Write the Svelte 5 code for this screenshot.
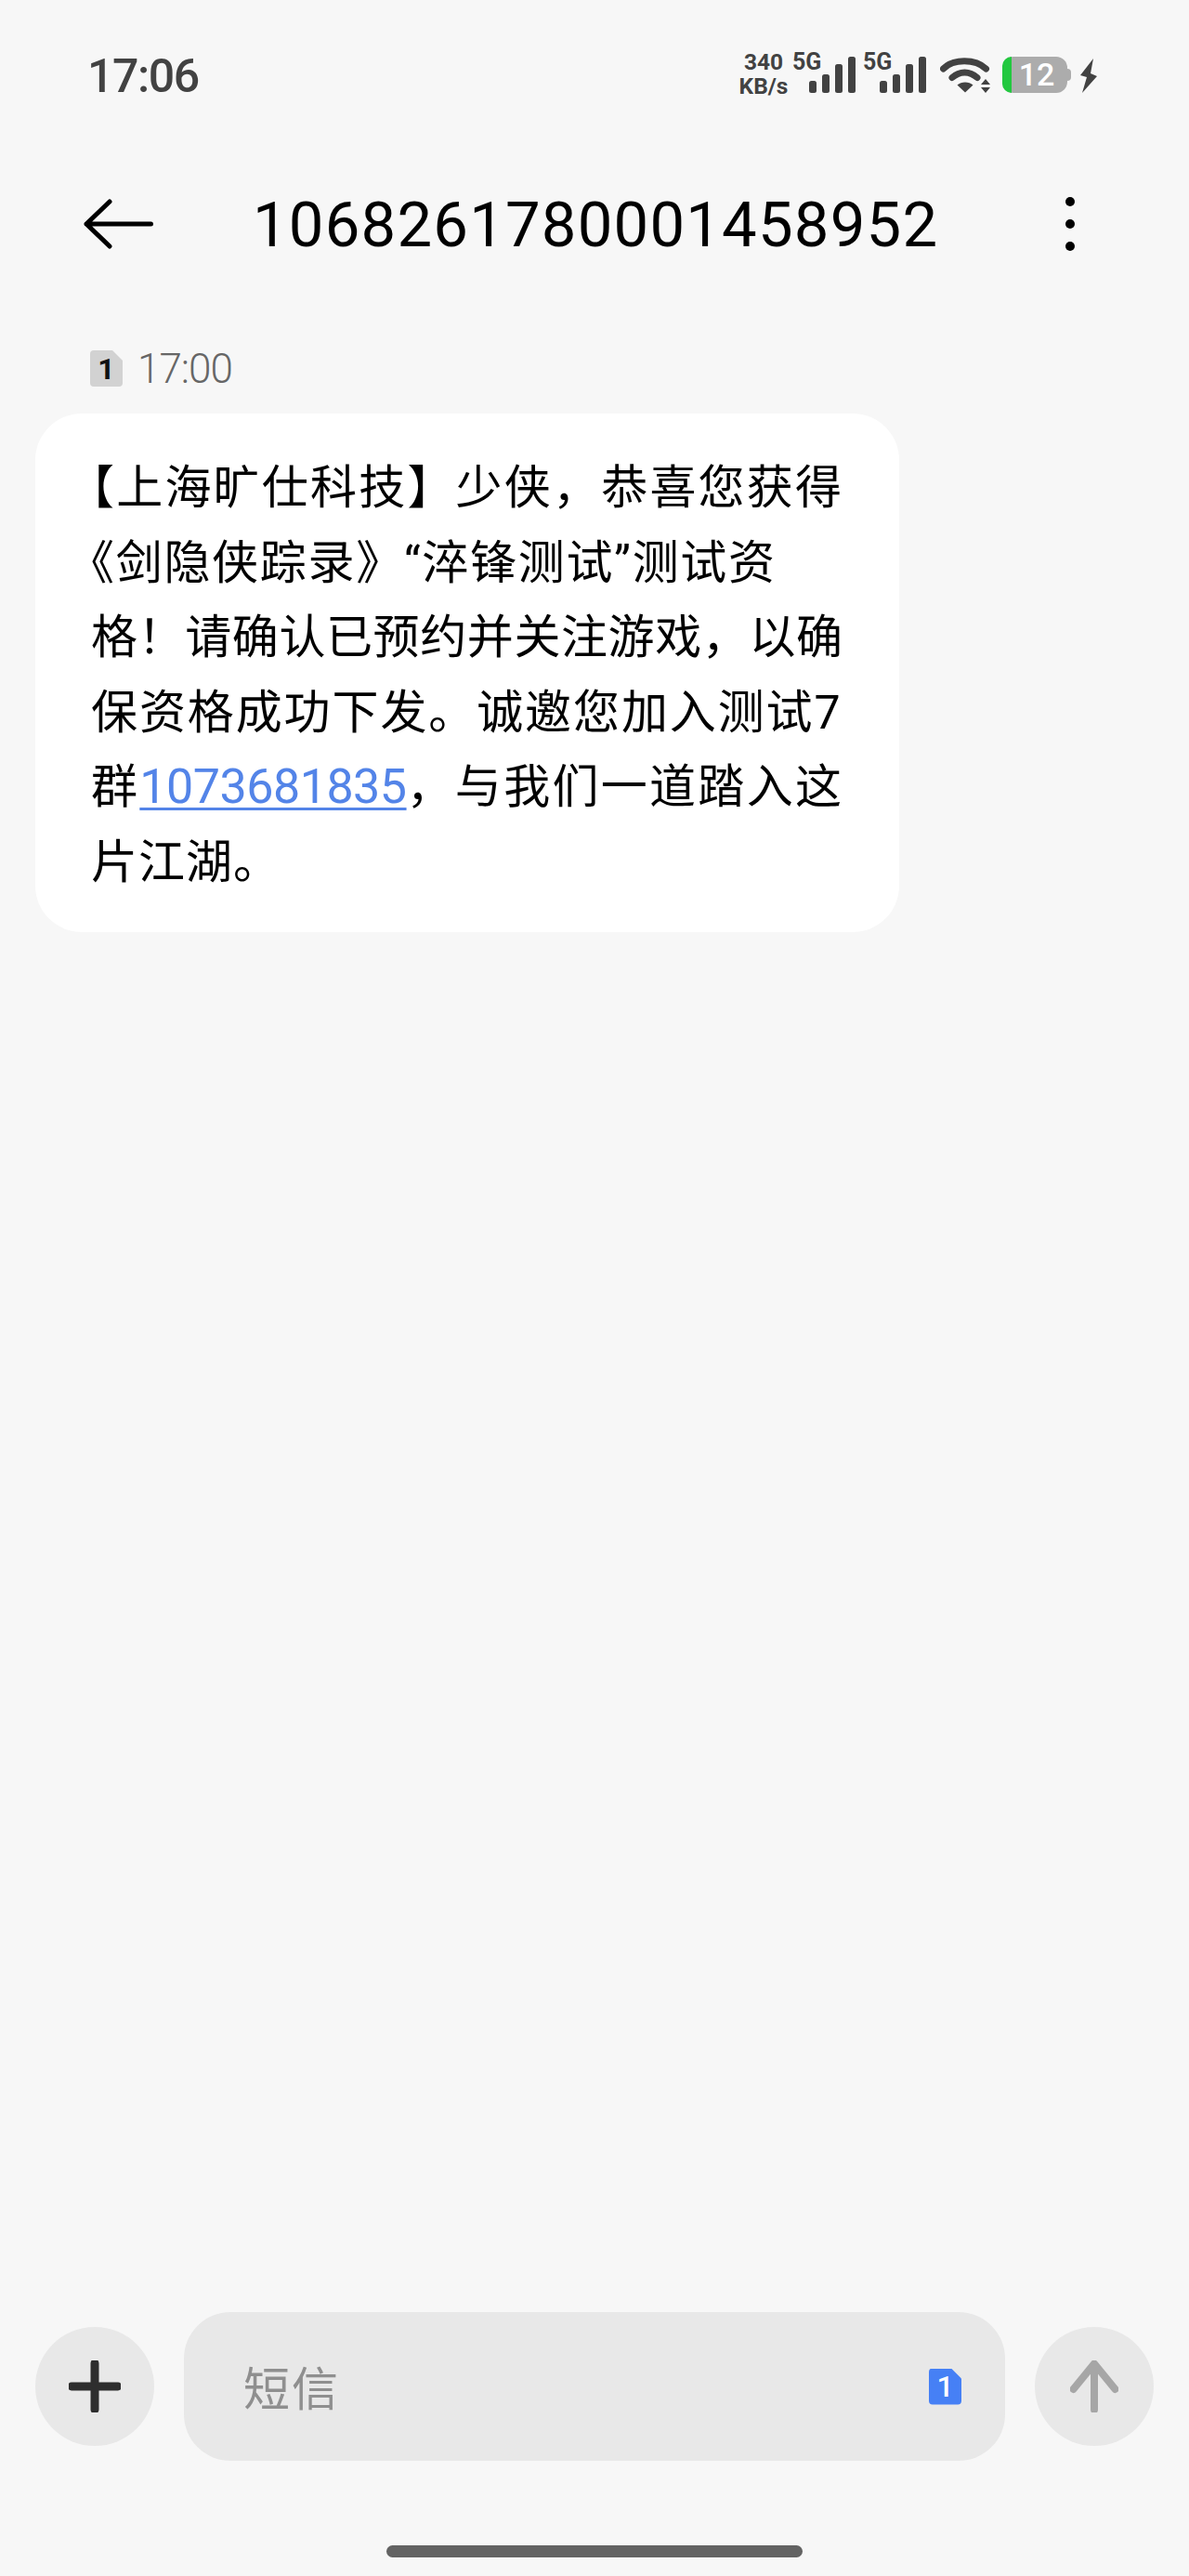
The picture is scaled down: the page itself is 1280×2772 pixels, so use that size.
<script>
  const bars = [
    { x: 0, h: 13 },
    { x: 14, h: 20 },
    { x: 28, h: 31 },
    { x: 42, h: 39 }
  ];
</script>

<div class="page">
  <div class="status">
    <span class="time">17:06</span>
    <div class="indicators">
      <div class="speed"><span>340</span><span>KB/s</span></div>
      <div class="net first">
        <span class="g">5G</span>
        <svg width="50" height="39" viewBox="0 0 50 39">
          {#each bars as b}
            <rect x={b.x} y={39 - b.h} width="8" height={b.h} rx="2.5" fill="#424242" />
          {/each}
        </svg>
      </div>
      <div class="net second">
        <span class="g">5G</span>
        <svg width="50" height="39" viewBox="0 0 50 39">
          {#each bars as b}
            <rect x={b.x} y={39 - b.h} width="8" height={b.h} rx="2.5" fill="#424242" />
          {/each}
        </svg>
      </div>
      <svg class="wifi" width="54" height="39" viewBox="0 0 54 39">
        <path d="M3.5 13 C14 2 38 2 49.5 13" fill="none" stroke="#424242" stroke-width="7" stroke-linecap="round" />
        <path d="M13 22.5 C21 15 32 15 40 22.5" fill="none" stroke="#424242" stroke-width="7" stroke-linecap="round" />
        <path d="M18.5 30.5 C23 26.5 31 26.5 35.5 30.5 L27 38.5 Z" fill="#424242" />
        <path d="M44 30 H54 L49 24 Z M44 33 H54 L49 39 Z" fill="#424242" />
      </svg>
      <div class="battery">
        <div class="charge"></div>
        <span>12</span>
        <div class="cap"></div>
      </div>
      <svg class="bolt" width="18" height="37" viewBox="0 0 18 37">
        <path d="M14 0 L0 18 L7 20 L2 37 L18 19 L11 16 Z" fill="#424242" />
      </svg>
    </div>
  </div>

  <header class="top">
    <svg class="back" width="75" height="54" viewBox="0 0 75 54">
      <path d="M72.5 27 H3 M28 3 L3 27 L28 51" fill="none" stroke="#000" stroke-width="5" stroke-linecap="round" stroke-linejoin="round" />
    </svg>
    <h1>1068261780001458952</h1>
    <div class="more"><i></i><i></i><i></i></div>
  </header>

  <main class="thread">
    <div class="meta">
      <div class="sim grey">1</div>
      <span>17:00</span>
    </div>
    <div class="bubble">
      <span class="line l1">【上海旷仕科技】少侠，恭喜您获得</span>
      <span class="line l2">《剑隐侠踪录》“淬锋测试”测试资</span>
      <span class="line l3">格！请确认已预约并关注游戏，以确</span>
      <span class="line l4">保资格成功下发。诚邀您加入测试7</span>
      <span class="line l5">群<a href="#top">1073681835</a>，与我们一道踏入这</span>
      <span class="line l6">片江湖。</span>
    </div>
  </main>

  <footer class="composer">
    <div class="round">
      <svg width="56" height="56" viewBox="0 0 56 56">
        <path d="M28 3 V53 M3 28 H53" stroke="#2e2e2e" stroke-width="9" stroke-linecap="round" />
      </svg>
    </div>
    <div class="field">
      <span class="placeholder">短信</span>
      <div class="sim blue">1</div>
    </div>
    <div class="round">
      <svg width="52" height="56" viewBox="0 0 52 56">
        <path d="M26 53 V4 M3.5 31 L26 3.5 L48.5 31" fill="none" stroke="#a6a6a6" stroke-width="8" stroke-linecap="round" stroke-linejoin="round" />
      </svg>
    </div>
  </footer>
  <div class="home-wrap"><div class="home"></div></div>
</div>

<style>
  :global(body) {
    margin: 0;
    background: #f7f7f7;
  }
  .page {
    width: 1280px;
    height: 2772px;
    display: flex;
    flex-direction: column;
    background: #f7f7f7;
    font-family: Roboto, "Noto Sans CJK SC", sans-serif;
    overflow: hidden;
  }
  .status {
    height: 172px;
    box-sizing: border-box;
    padding: 52px 99px 0 94px;
    display: flex;
    justify-content: space-between;
    align-items: flex-start;
  }
  .time {
    font-size: 50px;
    line-height: 60px;
    font-weight: 500;
    letter-spacing: -1.4px;
    color: #424242;
  }
  .indicators {
    display: flex;
    align-items: flex-start;
    padding-top: 5px;
  }
  .speed {
    display: flex;
    flex-direction: column;
    align-items: center;
    width: 52px;
    margin-top: -3px;
    font-size: 24.5px;
    line-height: 26px;
    font-weight: 700;
    color: #424242;
  }
  .net {
    position: relative;
    width: 50px;
    height: 43px;
    padding-top: 4px;
  }
  .net.first { margin-left: 23px; }
  .net.second { margin-left: 26px; }
  .net .g {
    position: absolute;
    left: -18px;
    top: -3px;
    font-size: 25px;
    line-height: 26px;
    font-weight: 700;
    color: #424242;
  }
  .wifi {
    margin: 4px 0 0 15px;
  }
  .battery {
    position: relative;
    display: flex;
    align-items: center;
    justify-content: center;
    width: 70px;
    height: 39px;
    margin: 4px 0 0 13px;
    border-radius: 12px;
    background: #acacac;
  }
  .charge {
    position: absolute;
    left: 0;
    top: 0;
    bottom: 0;
    width: 10px;
    border-radius: 12px 0 0 12px;
    background: #22c83f;
  }
  .battery span {
    font-size: 34px;
    font-weight: 500;
    line-height: 39px;
    color: #fff;
    padding-left: 4px;
  }
  .cap {
    position: absolute;
    right: -4px;
    top: 13px;
    width: 4px;
    height: 13px;
    border-radius: 0 4px 4px 0;
    background: #acacac;
  }
  .bolt {
    margin: 6px 0 0 14px;
  }
  .top {
    height: 140px;
    box-sizing: border-box;
    padding: 0 123px 0 90px;
    display: flex;
    align-items: center;
  }
  .back {
    flex: none;
    margin-top: -2px;
  }
  h1 {
    margin: 0 0 0 107px;
    font-size: 67px;
    font-weight: 400;
    letter-spacing: 1.2px;
    color: #000;
    flex: 1;
    white-space: nowrap;
  }
  .more {
    display: flex;
    flex-direction: column;
    gap: 14px;
    margin-top: -2px;
  }
  .more i {
    width: 10px;
    height: 10px;
    border-radius: 50%;
    background: #000;
  }
  .thread {
    flex: 1;
    padding: 65px 0 0 38px;
  }
  .meta {
    display: flex;
    align-items: center;
    height: 39px;
    padding-left: 59px;
    gap: 16px;
    font-size: 44px;
    font-weight: 300;
    letter-spacing: -1px;
    color: #666;
  }
  .sim {
    display: flex;
    align-items: center;
    justify-content: center;
    width: 35px;
    height: 39px;
    clip-path: path("M4 0 H24 L35 11 V35 Q35 39 31 39 H4 Q0 39 0 35 V4 Q0 0 4 0 Z");
    font-size: 32px;
    letter-spacing: 0;
    font-weight: 700;
  }
  .sim.grey {
    background: #d2d2d2;
    color: #111;
  }
  .sim.blue {
    background: #4680f5;
    color: #fff;
    font-weight: 500;
  }
  .bubble {
    box-sizing: border-box;
    width: 930px;
    margin-top: 29px;
    padding: 40px 0 34px 60px;
    border-radius: 50px;
    background: #fff;
    color: #000;
    font-size: 50px;
    line-height: 80.6px;
    font-weight: 400;
    text-spacing-trim: trim-start;
  }
  .line {
    display: block;
    white-space: nowrap;
  }
  .l1 { letter-spacing: 2.2px; }
  .l2 { letter-spacing: 1.7px; }
  .l3 { letter-spacing: 0.6px; }
  .l4 { letter-spacing: 1.9px; }
  .l5 { letter-spacing: 2.3px; }
  .l6 { letter-spacing: 1px; }
  .bubble a {
    font-size: 52px;
    letter-spacing: -0.5px;
    color: #5384e8;
    text-decoration: underline;
    text-decoration-thickness: 3px;
    text-underline-offset: 5px;
  }
  .composer {
    display: flex;
    align-items: center;
    gap: 32px;
    padding: 0 38px;
    height: 160px;
  }
  .round {
    flex: none;
    width: 128px;
    height: 128px;
    border-radius: 50%;
    background: #e8e8e8;
    display: flex;
    align-items: center;
    justify-content: center;
  }
  .field {
    flex: 1;
    height: 160px;
    border-radius: 50px;
    background: #e8e8e8;
    display: flex;
    align-items: center;
    justify-content: space-between;
    padding: 0 47px 0 64px;
    box-sizing: border-box;
  }
  .placeholder {
    font-size: 50px;
    letter-spacing: 2px;
    margin-top: -3px;
    color: #8f8f8f;
  }
  .home-wrap {
    height: 124px;
    box-sizing: border-box;
    padding-top: 91px;
    display: flex;
    justify-content: center;
  }
  .home {
    width: 448px;
    height: 13px;
    border-radius: 7px;
    background: #636363;
  }
</style>
